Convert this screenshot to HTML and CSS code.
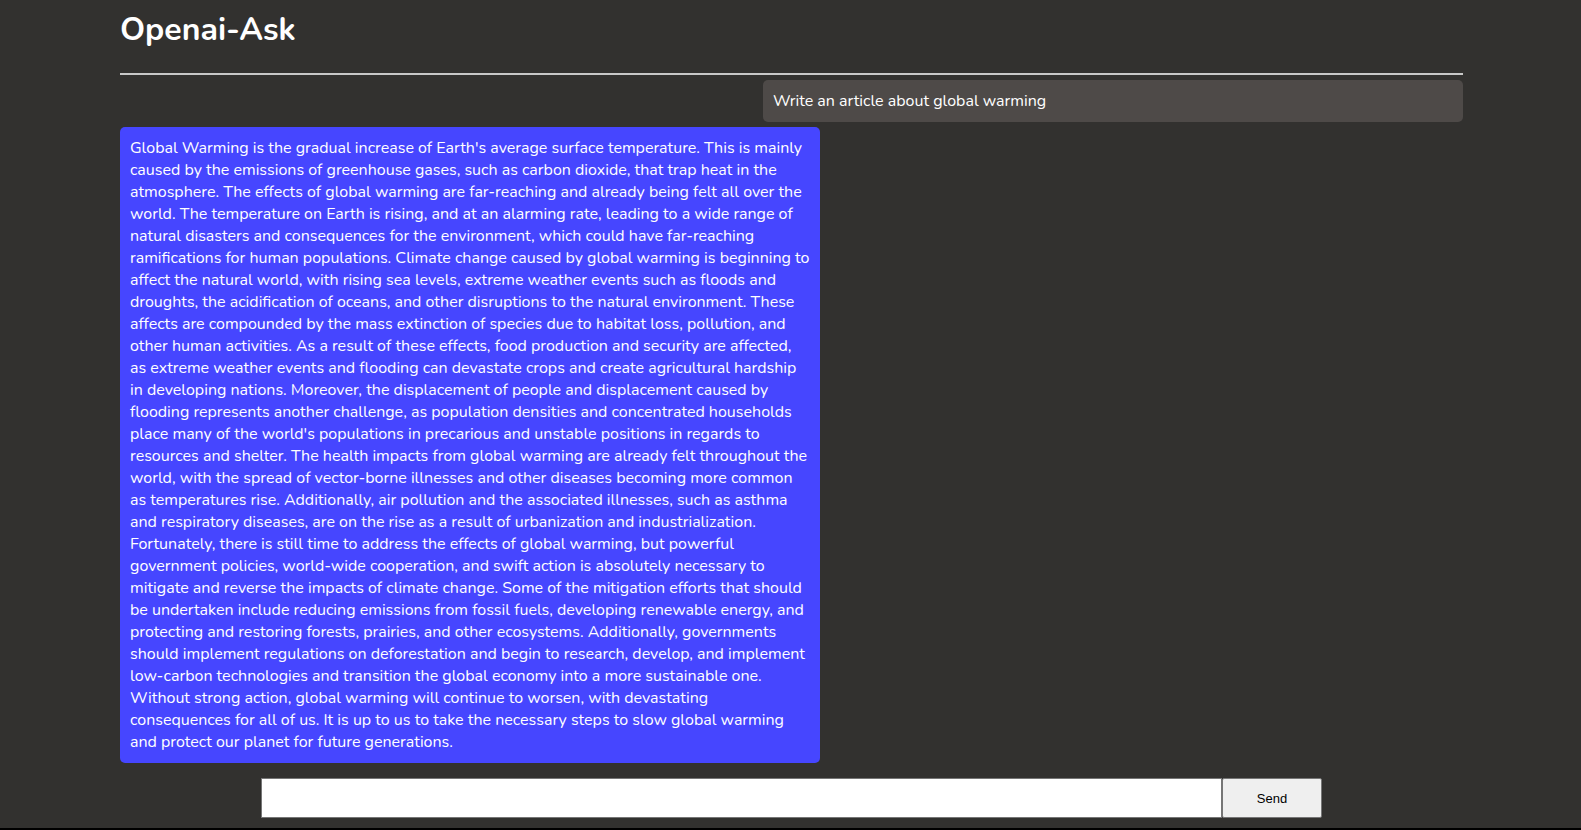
FILE: index.html
```
<!DOCTYPE html>
<html lang="en">
<head>
<meta charset="utf-8">
<meta name="viewport" content="width=device-width, initial-scale=1">
<title>Openai-Ask</title>
<link rel="stylesheet" href="styles.css">
</head>
<body>
<main class="chat">
  <header class="chat-header">
    <h1 class="title">Openai-Ask</h1>
  </header>
  <section class="messages">
    <p class="message message-user">Write an article about global warming</p>
    <p class="message message-bot">Global Warming is the gradual increase of Earth's average surface temperature. This is mainly
caused by the emissions of greenhouse gases, such as carbon dioxide, that trap heat in the
atmosphere. The effects of global warming are far-reaching and already being felt all over the
world. The temperature on Earth is rising, and at an alarming rate, leading to a wide range of
natural disasters and consequences for the environment, which could have far-reaching
ramifications for human populations. Climate change caused by global warming is beginning to
affect the natural world, with rising sea levels, extreme weather events such as floods and
droughts, the acidification of oceans, and other disruptions to the natural environment. These
affects are compounded by the mass extinction of species due to habitat loss, pollution, and
other human activities. As a result of these effects, food production and security are affected,
as extreme weather events and flooding can devastate crops and create agricultural hardship
in developing nations. Moreover, the displacement of people and displacement caused by
flooding represents another challenge, as population densities and concentrated households
place many of the world's populations in precarious and unstable positions in regards to
resources and shelter. The health impacts from global warming are already felt throughout the
world, with the spread of vector-borne illnesses and other diseases becoming more common
as temperatures rise. Additionally, air pollution and the associated illnesses, such as asthma
and respiratory diseases, are on the rise as a result of urbanization and industrialization.
Fortunately, there is still time to address the effects of global warming, but powerful
government policies, world-wide cooperation, and swift action is absolutely necessary to
mitigate and reverse the impacts of climate change. Some of the mitigation efforts that should
be undertaken include reducing emissions from fossil fuels, developing renewable energy, and
protecting and restoring forests, prairies, and other ecosystems. Additionally, governments
should implement regulations on deforestation and begin to research, develop, and implement
low-carbon technologies and transition the global economy into a more sustainable one.
Without strong action, global warming will continue to worsen, with devastating
consequences for all of us. It is up to us to take the necessary steps to slow global warming
and protect our planet for future generations.</p>
  </section>
  <form class="ask">
    <input class="ask-input" type="text" name="question" aria-label="Question">
    <button class="ask-send" type="submit">Send</button>
  </form>
</main>
</body>
</html>
```
FILE: styles.css
```
* {
  box-sizing: border-box;
}

body {
  margin: 0;
  min-height: 100vh;
  background: #32312f;
  border-bottom: 2px solid #000;
  color: #fff;
  font-family: Nunito, Lato, "Open Sans", sans-serif;
  font-size: 16px;
  line-height: 22px;
}

.chat {
  padding: 0 118px 0 120px;
}

.chat-header {
  padding: 8px 0 21px;
  border-bottom: 2px solid #c8c8c8;
}

.title {
  margin: 0;
  font-size: 32px;
  line-height: 44px;
  font-weight: 700;
}

.messages {
  display: flex;
  flex-direction: column;
  gap: 5px;
  padding-top: 5px;
}

.message {
  width: 100%;
  max-width: 700px;
  margin: 0;
  padding: 10px;
  border-radius: 5px;
}

.message-user {
  align-self: flex-end;
  background: #4e4a48;
}

.message-bot {
  background: #4646ff;
}

.ask {
  display: flex;
  width: 79%;
  height: 40px;
  margin: 15px auto 10px;
}

.ask-input {
  flex: 1;
  min-width: 0;
  padding: 0 10px;
  border: 1px solid #767676;
  background: #fff;
  font: inherit;
}

.ask-send {
  width: 100px;
  border: 1px solid #767676;
  border-radius: 2px;
  background: #efefef;
  color: #000;
  font: 13px "Liberation Sans", Arial, sans-serif;
}
```
